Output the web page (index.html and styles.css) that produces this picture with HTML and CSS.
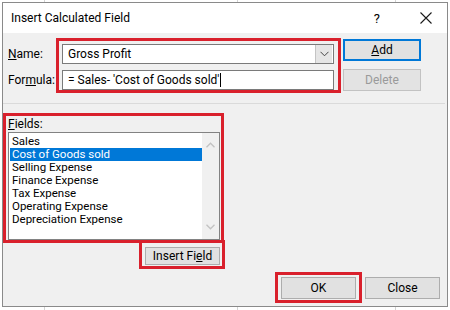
FILE: index.html
```html
<!DOCTYPE html>
<html lang="en">
  <head>
    <meta charset="UTF-8" />
    <title>Insert Calculated Field</title>
    <link rel="stylesheet" href="styles.css">
  </head>

  <body>
    <div class="desk">
      <div class="dialog">
        <header class="titlebar">
          <span class="title">Insert Calculated Field</span>
          <span class="help">?</span>
          <svg class="close-x" width="12" height="12" viewBox="0 0 12 12">
            <path d="M0.5 0.5 L11.5 11.5 M11.5 0.5 L0.5 11.5" stroke="#1a1a1a" stroke-width="1.1" fill="none" />
          </svg>
        </header>

        <section class="body">
          <div class="top">
            <div class="form">
              <label><u>N</u>ame:</label>
              <div class="combo">
                <span class="value">Gross Profit</span>
                <span class="drop">
                  <svg width="9" height="6" viewBox="0 0 9 6">
                    <path d="M0.5 0.8 L4.5 4.8 L8.5 0.8" stroke="#444" stroke-width="1" fill="none" />
                  </svg>
                </span>
              </div>
              <label>For<u>m</u>ula:</label>
              <div class="input">
                <span class="value">= Sales- 'Cost of Goods sold'</span><span class="caret"></span>
              </div>
            </div>
            <div class="side">
              <button class="btn default"><u>A</u>dd</button>
              <button class="btn disabled">Delete</button>
            </div>
          </div>

          <div class="separator"></div>

          <p class="fields-label"><u>F</u>ields:</p>
          <div class="listbox">
            <ul class="items">
              <li>Sales</li>
              <li class="selected">Cost of Goods sold</li>
              <li>Selling Expense</li>
              <li>Finance Expense</li>
              <li>Tax Expense</li>
              <li>Operating Expense</li>
              <li>Depreciation Expense</li>
            </ul>
            <div class="scrollbar">
              <svg width="9" height="6" viewBox="0 0 9 6">
                <path d="M0.5 5.2 L4.5 1.2 L8.5 5.2" stroke="#c2c2c2" stroke-width="1.3" fill="none" />
              </svg>
              <svg width="9" height="6" viewBox="0 0 9 6">
                <path d="M0.5 0.8 L4.5 4.8 L8.5 0.8" stroke="#c2c2c2" stroke-width="1.3" fill="none" />
              </svg>
            </div>
          </div>

          <button class="btn insert">Insert Fi<u>e</u>ld</button>

          <div class="footer">
            <button class="btn">OK</button>
            <button class="btn">Close</button>
          </div>
        </section>

        <div class="mark mark-name"></div>
        <div class="mark mark-fields"></div>
        <div class="mark mark-insert"></div>
        <div class="mark mark-ok"></div>
      </div>
    </div>
  </body>
</html>
```

FILE: styles.css
```css
* {
  box-sizing: border-box;
}

body {
  margin: 0;
  font-family: "Segoe UI", Roboto, sans-serif;
  font-size: 12px;
  color: #000;
}

.desk {
  width: 450px;
  height: 310px;
  padding: 2px 0 0 2px;
  background-color: #fff;
  background-image: linear-gradient(to right, transparent 44px, #d4d4d4 44px, #d4d4d4 45px, transparent 45px),
    linear-gradient(to right, transparent 237px, #d4d4d4 237px, #d4d4d4 238px, transparent 238px),
    linear-gradient(to right, transparent 395px, #d4d4d4 395px, #d4d4d4 396px, transparent 396px);
}

.dialog {
  position: relative;
  width: 446px;
  height: 305px;
  border: 1px solid #8a8a8a;
  background: #f0f0f0;
}

/* title bar */
.titlebar {
  display: flex;
  align-items: center;
  height: 30px;
  padding-left: 8px;
  background: #fff;
}

.title {
  flex: 1;
  font-size: 12px;
}

.help {
  font-size: 13px;
  margin-right: 40px;
}

.close-x {
  margin-right: 15px;
}

/* body */
.body {
  height: 273px;
  padding: 6px 7px 0 5px;
}

.top {
  display: flex;
}

.form {
  display: grid;
  grid-template-columns: 54px 272px;
  row-gap: 4px;
  align-items: center;
  padding-top: 4px;
}

.form label {
  font-size: 12px;
}

.combo,
.input {
  display: flex;
  align-items: center;
  height: 20px;
  border: 1px solid #7a7a7a;
  background: #fff;
  padding-left: 5px;
  font-size: 12px;
}

.combo .value {
  flex: 1;
}

.drop {
  display: flex;
  align-items: center;
  justify-content: center;
  width: 17px;
  height: 18px;
  margin-right: 1px;
  background: #e5e5e5;
  border-left: 1px solid #c4c4c4;
}

.caret {
  display: inline-block;
  width: 1px;
  height: 14px;
  margin-left: 1px;
  background: #000;
}

.side {
  display: flex;
  flex-direction: column;
  gap: 8px;
  margin-left: 9px;
}

.btn {
  font-family: "Segoe UI", Roboto, sans-serif;
  font-size: 12px;
  color: #000;
  width: 75px;
  height: 22px;
  padding: 0;
  background: #e1e1e1;
  border: 1px solid #adadad;
}

.side .btn {
  width: 78px;
}

.btn.default {
  border: 2px solid #0078d7;
}

.btn.disabled {
  color: #9a9a9a;
  background: #e3e3e3;
  border-color: #c2c2c2;
}

.separator {
  height: 1px;
  margin: 12px -5px 0 -5px;
  background: #dadada;
}

.fields-label {
  margin: 13px 0 1px 0;
  line-height: 14px;
}

.listbox {
  display: flex;
  width: 212px;
  height: 108px;
  border: 1px solid #828282;
  background: #fff;
}

.items {
  flex: 1;
  list-style: none;
  margin: 0;
  padding: 2px 0 0 1px;
  font-size: 11.5px;
}

.items li {
  height: 13px;
  line-height: 13px;
  padding-left: 2px;
}

.items li.selected {
  background: #0078d7;
  color: #fff;
}

.scrollbar {
  display: flex;
  flex-direction: column;
  justify-content: space-between;
  align-items: center;
  width: 17px;
  padding: 9px 0 9px 0;
  background: #f0f0f0;
}

.btn.insert {
  display: block;
  width: 75px;
  height: 18px;
  margin: 7px 0 0 137px;
}

.footer {
  display: flex;
  justify-content: flex-end;
  gap: 9px;
  margin-top: 12px;
}

/* red annotation boxes over the dialog */
.mark {
  position: absolute;
  border: 3px solid #d9202c;
}

.mark-name {
  left: 53px;
  top: 35px;
  width: 285px;
  height: 55px;
}

.mark-fields {
  left: 0;
  top: 110px;
  width: 221px;
  height: 130px;
}

.mark-insert {
  left: 136px;
  top: 237px;
  width: 86px;
  height: 29px;
}

.mark-ok {
  left: 272px;
  top: 269px;
  width: 87px;
  height: 31px;
}
```
